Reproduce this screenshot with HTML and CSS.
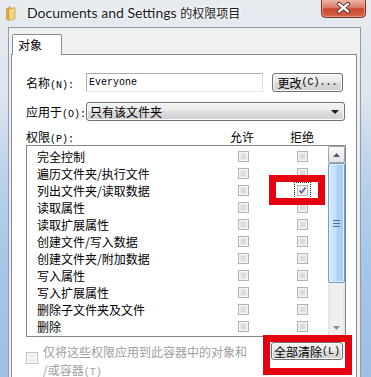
FILE: index.html
```html
<!DOCTYPE html>
<html lang="zh-CN">
<head>
<meta charset="utf-8">
<title>Documents and Settings 的权限项目</title>
<link rel="stylesheet" href="styles.css">
</head>
<body>
<div class="window">
  <div class="titlebar">
    <svg class="folder" width="11" height="16" viewBox="0 0 11 16">
      <path d="M1 3.5 L6 1 L6 13 L1 15.5 Z" fill="#d9a83c"/>
      <path d="M3.5 4.5 L10 2.5 L10 13.5 L3.5 15.5 Z" fill="#f3d47e" stroke="#b98a2e" stroke-width="0.6"/>
      <path d="M4.5 6 L9 4.7" stroke="#fbe8b0" stroke-width="0.8"/>
    </svg>
    <div class="title">Documents and Settings <span class="title-cjk">的权限项目</span></div>
    <div class="close">
      <svg width="45" height="18" viewBox="0 0 45 18">
        <defs>
          <linearGradient id="cg" x1="0" y1="0" x2="0" y2="1">
            <stop offset="0" stop-color="#ecb6a8"/>
            <stop offset="0.45" stop-color="#db7862"/>
            <stop offset="0.5" stop-color="#c8452d"/>
            <stop offset="1" stop-color="#d8684e"/>
          </linearGradient>
        </defs>
        <path d="M0.5 0 V13.5 Q0.5 17.5 4.5 17.5 H40.5 Q44.5 17.5 44.5 13.5 V0" fill="url(#cg)" stroke="#7a3024"/>
        <path d="M1.5 0 V13 Q1.5 16.5 5 16.5 H40 Q43.5 16.5 43.5 13 V0" fill="none" stroke="#f2b9aa" stroke-opacity="0.6"/>
        <path d="M18 4 L27 11.5 M27 4 L18 11.5" stroke="#4a1d15" stroke-width="4.2" stroke-linecap="round"/>
        <path d="M18 4 L27 11.5 M27 4 L18 11.5" stroke="#ffffff" stroke-width="2.4" stroke-linecap="round"/>
      </svg>
    </div>
  </div>

  <div class="client">
    <div class="tabs">
      <div class="tab">对象</div>
    </div>
    <div class="page">
      <div class="row r1">
        <span class="label">名称<span class="mn">(N):</span></span>
        <div class="input">Everyone</div>
        <div class="btn btn-change">更改<span class="mn">(C)...</span></div>
      </div>
      <div class="row r2">
        <span class="label">应用于<span class="mn">(O):</span></span>
        <div class="btn combo"><span class="combo-text">只有该文件夹</span><i class="arrow"></i></div>
      </div>
      <div class="row r3">
        <span class="label label-perm">权限<span class="mn">(P):</span></span>
        <span class="col-allow">允许</span>
        <span class="col-deny">拒绝</span>
      </div>
      <div class="listbox">
        <div class="items">
          <div class="item"><span class="name">完全控制</span><span class="cb"></span><span class="cb cb-deny"></span></div>
          <div class="item"><span class="name">遍历文件夹/执行文件</span><span class="cb"></span><span class="cb cb-deny"></span></div>
          <div class="item"><span class="name">列出文件夹/读取数据</span><span class="cb"></span><span class="cb cb-deny cb-checked"><svg width="9" height="9" viewBox="0 0 9 9"><path d="M1.5 4.5 L3.5 6.8 L7.5 1.5" fill="none" stroke="#5e5aa8" stroke-width="1.6"/></svg></span></div>
          <div class="item"><span class="name">读取属性</span><span class="cb"></span><span class="cb cb-deny"></span></div>
          <div class="item"><span class="name">读取扩展属性</span><span class="cb"></span><span class="cb cb-deny"></span></div>
          <div class="item"><span class="name">创建文件/写入数据</span><span class="cb"></span><span class="cb cb-deny"></span></div>
          <div class="item"><span class="name">创建文件夹/附加数据</span><span class="cb"></span><span class="cb cb-deny"></span></div>
          <div class="item"><span class="name">写入属性</span><span class="cb"></span><span class="cb cb-deny"></span></div>
          <div class="item"><span class="name">写入扩展属性</span><span class="cb"></span><span class="cb cb-deny"></span></div>
          <div class="item"><span class="name">删除子文件夹及文件</span><span class="cb"></span><span class="cb cb-deny"></span></div>
          <div class="item"><span class="name">删除</span><span class="cb"></span><span class="cb cb-deny"></span></div>
        </div>
        <div class="scrollbar">
          <div class="sb-up"><svg width="7" height="4" viewBox="0 0 7 4"><path d="M0 4 L3.5 0 L7 4 Z" fill="#4d5a6e"/></svg></div>
          <div class="sb-thumb"><span class="grip"></span></div>
          <div class="sb-track"></div>
          <div class="sb-down"><svg width="7" height="4" viewBox="0 0 7 4"><path d="M0 0 L7 0 L3.5 4 Z" fill="#8a8f96"/></svg></div>
        </div>
      </div>
      <div class="bottom">
        <div class="inherit">
          <span class="cb cb-big"></span>
          <span class="inherit-text"><span class="line">仅将这些权限应用到此容器中的对象和</span><span class="line">/或容器<span class="mn">(T)</span></span></span>
        </div>
        <div class="btn btn-clear">全部清除<span class="mn">(L)</span></div>
      </div>
    </div>
  </div>

  <div class="mark mark-check"></div>
  <div class="mark mark-clear"></div>
</div>
</body>
</html>
```

FILE: styles.css
```css
* { box-sizing: border-box; margin: 0; padding: 0; }
html, body { width: 371px; height: 377px; overflow: hidden; }
body {
  font-family: "Noto Sans CJK SC", "Noto Sans", sans-serif;
  font-size: 12px;
  color: #000;
  background: #a9c7e6;
}

.window {
  position: relative;
  width: 371px;
  height: 377px;
  display: flex;
  flex-direction: column;
  background: linear-gradient(180deg, #e6ebf0 0%, #dde5ed 25%, #bcd3ea 45%, #a5c6e7 70%, #9dc0e4 100%);
}

/* title bar */
.titlebar {
  height: 27px;
  display: flex;
  align-items: flex-start;
  flex: none;
}
.folder { margin: 5px 0 0 5px; flex: none; }
.title {
  margin-left: 11px;
  padding-top: 3px;
  line-height: 20px;
  font-family: "Lato", "Noto Sans CJK SC", sans-serif;
  font-size: 14px;
  color: #1a1a1a;
  text-shadow: 0 0 6px #ffffff, 0 0 3px #ffffff;
  white-space: nowrap;
}
.title-cjk { font-family: "Noto Sans CJK SC", sans-serif; font-size: 12px; }
.close { margin-left: auto; margin-right: 5px; height: 18px; flex: none; }
.close svg { display: block; }

/* client area */
.client {
  flex: 1;
  margin: 0 10px 0 8px;
  background: #f0f0f0;
  border: 1px solid #8e9cab;
  border-bottom: none;
  padding: 6px 3px 0 2px;
  display: flex;
  flex-direction: column;
}
.tabs { height: 20px; display: flex; flex: none; }
.tab {
  position: relative;
  z-index: 1;
  margin-left: 1px;
  width: 50px;
  height: 21px;
  border: 1px solid #898c95;
  border-bottom: none;
  border-radius: 2px 2px 0 0;
  background: #ffffff;
  padding-left: 5px;
  line-height: 19px;
}
.page {
  flex: 1;
  border: 1px solid #898c95;
  background: #ffffff;
  padding: 18px 0 0 14px;
}

.mn { font-family: "Liberation Mono", monospace; font-size: 10px; }

.row { display: flex; align-items: center; }
.r1 { height: 19px; }
.r2 { height: 19px; margin-top: 10px; }
.r3 { height: 18px; margin-top: 6px; }
.label { width: 60px; flex: none; white-space: nowrap; }
.label-perm { width: 204px; }
.col-allow { width: 25px; }
.col-deny { margin-left: 35px; }

.input {
  width: 177px;
  height: 19px;
  border: 1px solid #abadb3;
  border-right-color: #dbdfe6;
  border-bottom-color: #e3e9ef;
  padding-left: 2px;
  font-family: "Liberation Mono", monospace;
  font-size: 10px;
  line-height: 17px;
}

.btn {
  border: 1px solid #707070;
  border-radius: 3px;
  background: linear-gradient(180deg, #f2f2f2 0%, #ebebeb 45%, #dddddd 50%, #cfcfcf 100%);
  box-shadow: inset 0 0 0 1px #fbfbfb;
  display: flex;
  align-items: center;
  justify-content: center;
  white-space: nowrap;
}
.btn-change { margin-left: 9px; width: 71px; height: 19px; }
.combo {
  width: 259px;
  height: 19px;
  justify-content: space-between;
  padding: 0 5px 0 3px;
}
.arrow {
  width: 0; height: 0;
  border-left: 4px solid transparent;
  border-right: 4px solid transparent;
  border-top: 4px solid #1f1f1f;
}

/* list */
.listbox {
  width: 320px;
  height: 192px;
  border: 1px solid #828790;
  display: flex;
}
.items { flex: 1; padding: 2px 0 0 10px; }
.item { height: 17px; display: flex; align-items: center; }
.name { width: 201px; white-space: nowrap; }

.cb {
  width: 11px;
  height: 11px;
  flex: none;
  border: 1px solid #b3b3b3;
  background: #dcdcdc;
  box-shadow: inset 0 0 0 1px #f4f4f4, inset 0 0 0 2px #e9e9e9;
  display: flex;
  align-items: center;
  justify-content: center;
}
.cb-deny { margin-left: 48px; }
.cb-checked {
  background: #eeeeee;
  outline: 1px dotted #222;
  outline-offset: 2px;
}
.cb-checked svg { display: block; }

.scrollbar {
  width: 17px;
  flex: none;
  display: flex;
  flex-direction: column;
  background: linear-gradient(90deg, #e3e3e3 0%, #f0f0f0 20%, #f0f0f0 80%, #e3e3e3 100%);
}
.sb-up {
  height: 17px;
  border: 1px solid #a0a5ac;
  border-radius: 2px;
  background: linear-gradient(180deg, #fbfbfb, #e4e4e4);
  display: flex;
  align-items: center;
  justify-content: center;
}
.sb-thumb {
  height: 120px;
  border: 1px solid #6a9ccc;
  border-radius: 2px;
  background: linear-gradient(90deg, #d6eafc 0%, #c0def8 45%, #acd2f4 55%, #a6cdf1 100%);
  box-shadow: inset 0 0 0 1px #e5f2fd;
  display: flex;
  align-items: center;
  justify-content: center;
}
.grip {
  width: 7px;
  height: 7px;
  background: repeating-linear-gradient(180deg, #4f6f93 0 1px, transparent 1px 3px);
}
.sb-track { flex: 1; }
.sb-down {
  height: 17px;
  display: flex;
  align-items: center;
  justify-content: center;
}
.sb-up svg, .sb-down svg { display: block; }

/* bottom */
.bottom {
  display: flex;
  align-items: flex-start;
  margin-top: 5px;
}
.inherit { display: flex; align-items: flex-start; width: 245px; }
.cb-big { width: 12px; height: 12px; margin-top: 10px; border-color: #c2c2c2; background: #f2f2f2; box-shadow: inset 0 0 0 1px #fafafa; }
.inherit-text {
  margin: 1px 0 0 5px;
  color: #9d9d9d;
  white-space: nowrap;
  display: flex;
  flex-direction: column;
}
.line { display: block; height: 18px; line-height: 18px; }
.btn-clear { margin-left: auto; margin-right: 13px; width: 72px; height: 18px; }

/* annotation marks */
.mark { position: absolute; border: 7px solid #e4000f; }
.mark-check { left: 269px; top: 175px; width: 56px; height: 30px; }
.mark-clear { left: 263px; top: 335px; width: 89px; height: 40px; }
```
